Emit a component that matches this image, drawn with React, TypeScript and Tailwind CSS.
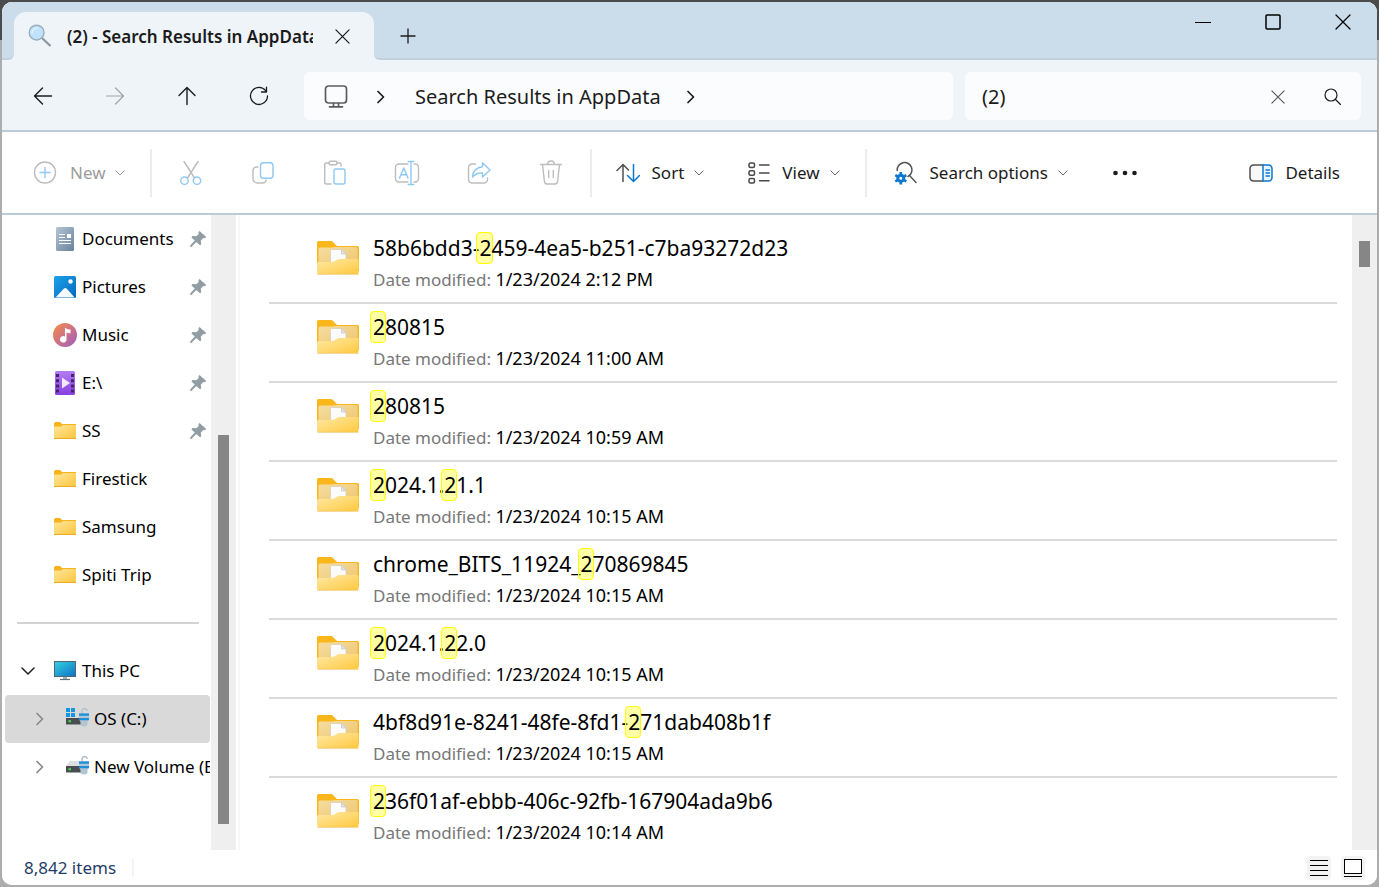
import React, { useState } from "react";

const iconBase = {
  fill: "none",
  strokeLinecap: "round" as const,
  strokeLinejoin: "round" as const,
  "aria-hidden": true,
};

const Chevron = ({ className }: { className: string }) => (
  <svg {...iconBase} viewBox="0 0 10 6" className={`w-[10px] h-[6px] ${className}`} stroke="currentColor" strokeWidth="1">
    <path d="M.8.8 5 5 9.200.8" />
  </svg>
);

const ChevronRight = ({ className }: { className: string }) => (
  <svg {...iconBase} viewBox="0 0 8 14" className={`w-2 h-[14px] shrink-0 ${className}`} stroke="currentColor" strokeWidth="1.7">
    <path d="M1 1.500 6.500 7 1 12.500" />
  </svg>
);

const CloseIcon = ({ className }: { className: string }) => (
  <svg {...iconBase} viewBox="0 0 16 16" className={className} stroke="currentColor" strokeWidth="1.3">
    <path d="M1 1 15 15M15 1 1 15" />
  </svg>
);

const MagnifierIcon = () => (
  <svg viewBox="0 0 24 24" className="w-6 h-6 shrink-0" fill="none" aria-hidden>
    <path d="m14 14 8.500 8" stroke="#8b979f" strokeWidth="2.300" />
    <circle cx="8.600" cy="8.600" r="7.400" fill="#bfe3fd" stroke="#9aaebb" strokeWidth="1.400" />
    <path d="M4 10a5.500 5.500 0 0 1 6-6" stroke="#dff2ff" strokeWidth="1.500" />
  </svg>
);

const BackIcon = () => (
  <svg {...iconBase} viewBox="0 0 20 20" className="w-5 h-5" stroke="currentColor" strokeWidth="1.400">
    <path d="M18.500 10H1.500M9.500 2 1.500 10l8 8" />
  </svg>
);

const ForwardIcon = () => (
  <svg {...iconBase} viewBox="0 0 20 20" className="w-5 h-5" stroke="currentColor" strokeWidth="1.200">
    <path d="M1.500 10h17M10.500 2l8 8-8 8" />
  </svg>
);

const UpIcon = () => (
  <svg {...iconBase} viewBox="0 0 20 20" className="w-5 h-5" stroke="currentColor" strokeWidth="1.400">
    <path d="M10 18.500v-17M2 9.500l8-8 8 8" />
  </svg>
);

const RefreshIcon = () => (
  <svg {...iconBase} viewBox="0 0 20 20" className="w-5 h-5" stroke="currentColor" strokeWidth="1.300">
    <path d="M18.500 10a8.500 8.500 0 1 1-1.800-5.300L17.500 6M17.500 1.200V6h-5" />
  </svg>
);

const MonitorIcon = () => (
  <svg {...iconBase} viewBox="0 0 24 24" className="w-6 h-6" stroke="#5c5c5c" strokeWidth="1.700">
    <rect x="1.500" y="1" width="21" height="17" rx="3" />
    <path d="M9.500 18.500v3M14.500 18.500v3M5.500 21.800h13" />
  </svg>
);

const NewIcon = () => (
  <svg {...iconBase} viewBox="0 0 24 24" className="w-6 h-6" strokeWidth="1.400">
    <circle cx="12" cy="11.500" r="10.500" stroke="#bdbdbd" />
    <path d="M12 6.500v10M7 11.500h10" stroke="#8fc8f2" />
  </svg>
);

const CutIcon = () => (
  <svg {...iconBase} viewBox="0 0 24 26" className="w-6 h-[26px]" strokeWidth="1.400">
    <path d="M5 1.500 15.500 18M19 1.500 8.500 18" stroke="#bdbdbd" />
    <circle cx="5.500" cy="20.700" r="3.700" stroke="#8fc8f2" />
    <circle cx="18" cy="20.700" r="3.700" stroke="#8fc8f2" />
  </svg>
);

const CopyIcon = () => (
  <svg {...iconBase} viewBox="0 0 24 24" className="w-6 h-6" strokeWidth="1.400">
    <path d="M7 6H5.500A3.500 3.500 0 0 0 2 9.500V18a4 4 0 0 0 4 4h5.500a3.500 3.500 0 0 0 3.500-3" stroke="#bdbdbd" />
    <rect x="9.500" y="1.800" width="12.500" height="15.500" rx="3" stroke="#8fc8f2" />
  </svg>
);

const PasteIcon = () => (
  <svg {...iconBase} viewBox="0 0 24 26" className="w-6 h-[26px]" strokeWidth="1.400">
    <path d="M8 24H3.500A1.800 1.800 0 0 1 1.700 22.200V4.500A1.500 1.500 0 0 1 3.200 3H6M14 3h2.500A1.500 1.500 0 0 1 18 4.500V6" stroke="#bdbdbd" />
    <rect x="6" y="1.300" width="8" height="3.500" rx="1.500" stroke="#bdbdbd" />
    <rect x="11" y="9" width="11" height="15" rx="2" stroke="#8fc8f2" />
  </svg>
);

const RenameIcon = () => (
  <svg {...iconBase} viewBox="0 0 26 26" className="w-[26px] h-[26px]" strokeWidth="1.400">
    <path d="M14 4H5a3.500 3.500 0 0 0-3.500 3.500v11A3.500 3.500 0 0 0 5 22h9M20 4h1a3.500 3.500 0 0 1 3.500 3.500v11A3.500 3.500 0 0 1 21 22h-1" stroke="#bdbdbd" />
    <path d="M5.500 18 9.800 8l4.200 10M7 14.800h5.500M17 1.500v23M14.200 1.500h5.600M14.200 24.500h5.600" stroke="#8fc8f2" />
  </svg>
);

const ShareIcon = () => (
  <svg {...iconBase} viewBox="0 0 24 24" className="w-6 h-6" strokeWidth="1.400">
    <path d="M8.500 3H5a3.500 3.500 0 0 0-3.500 3.500v12A3.500 3.500 0 0 0 5 22h12a3.500 3.500 0 0 0 3.500-3.500V17" stroke="#bdbdbd" />
    <path d="M15.500 1.800 23 9l-7.500 7v-4c-4.500-.3-7.500 1-10 4 0-5.500 4-9.800 10-10.300z" stroke="#8fc8f2" />
  </svg>
);

const DeleteIcon = () => (
  <svg {...iconBase} viewBox="0 0 24 26" className="w-6 h-[26px]" stroke="#bdbdbd" strokeWidth="1.400">
    <path d="M1.500 4.500h21M3.500 4.500l2 17.500a2.500 2.500 0 0 0 2.500 2h8a2.500 2.500 0 0 0 2.500-2l2-17.500M8.700 4.300a3.300 3.300 0 0 1 6.600 0M9.700 10.500v7M14.300 10.500v7" />
  </svg>
);

const SortIcon = () => (
  <svg {...iconBase} viewBox="0 0 24 20" className="w-6 h-5" strokeWidth="1.500">
    <path d="M7 18.500V1.500M1 7.500l6-6 5.500 5.500" stroke="#505050" />
    <path d="M17.500 1.500v17M11.500 12.500l6 6 6-6" stroke="#0a78d0" />
  </svg>
);

const ViewIcon = () => (
  <svg {...iconBase} viewBox="0 0 22 22" className="w-[22px] h-[22px]" stroke="#484848" strokeWidth="1.500">
    <rect x="1" y="1" width="5.500" height="4.500" rx="1.500" />
    <rect x="1" y="8.700" width="5.500" height="4.500" rx="1.500" />
    <rect x="1" y="16.400" width="5.500" height="4.500" rx="1.500" />
    <path d="M11.500 3H21M11.500 11H21M11.500 18.700H21" />
  </svg>
);

const SearchOptionsIcon = () => (
  <svg viewBox="0 0 24 24" className="w-6 h-6" fill="none" aria-hidden>
    <path d="M3.200 9.500A7.400 7.400 0 1 1 14 15.500M15.800 14.800l6.200 6.700" stroke="#555" strokeWidth="1.500" strokeLinecap="round" />
    <circle cx="6.800" cy="17.300" r="3" stroke="#0a78d0" strokeWidth="3" />
    <path
      d="M6.800 11v3M6.800 20.600v3M1.300 14.100l2.600 1.600M9.700 18.900l2.600 1.600M1.300 20.500l2.600-1.600M9.700 15.700l2.600-1.600"
      stroke="#0a78d0"
      strokeWidth="2.600"
    />
  </svg>
);

const DetailsIcon = () => (
  <svg {...iconBase} viewBox="0 0 24 18" className="w-6 h-[18px]" strokeWidth="1.500">
    <path d="M14 1H4.500A3.500 3.500 0 0 0 1 4.500v9A3.500 3.500 0 0 0 4.500 17H14" stroke="#505050" fill="#f8f8f8" />
    <path d="M14 1h5.500A3.500 3.500 0 0 1 23 4.500v9a3.500 3.500 0 0 1-3.500 3.500H14z" stroke="#0a78d0" fill="#eaf6ff" />
    <path d="M17 6h3.500M17 9h3.500M17 12h3.500" stroke="#0a78d0" strokeWidth="1.300" />
  </svg>
);

const PinIcon = () => (
  <svg viewBox="0 0 16 16" className="w-4 h-4 shrink-0" aria-hidden>
    <path d="M9.500 0 16 5.800l-.8 1.400-2-.2-2.400 2.700.4 3.500-1.200 1L6.300 11 1.400 16 0 15.800l.3-1.600L4.800 9.400 1.500 6.400l1-1.300 3.700.2L8.800 3 8.400 1z" fill="#919ca3" />
  </svg>
);

const DocumentsIcon = () => (
  <svg viewBox="0 0 24 24" className="w-6 h-6" aria-hidden>
    <defs>
      <linearGradient id="doc" x1="0" y1="0" x2="1" y2="1">
        <stop offset="0" stopColor="#b3c5d7" />
        <stop offset="1" stopColor="#69829d" />
      </linearGradient>
    </defs>
    <rect x="3" width="18" height="24" rx="1.500" fill="url(#doc)" />
    <path d="M6 7.500h6M6 10.500h6M6 13.500h12M6 16.500h12" stroke="#fff" strokeWidth="1.200" />
    <rect x="14" y="7" width="4" height="4" fill="#fff" />
  </svg>
);

const PicturesIcon = () => (
  <svg viewBox="0 0 24 24" className="w-6 h-6" aria-hidden>
    <defs>
      <linearGradient id="pic" x1="0" y1="0" x2="1" y2="1">
        <stop offset="0" stopColor="#1ba3ea" />
        <stop offset="1" stopColor="#0768bd" />
      </linearGradient>
    </defs>
    <rect x="1" y="1" width="22" height="22" rx="1.500" fill="url(#pic)" />
    <path d="M2.500 22.500 11 13.500q1.300-1.200 2.600 0l8 9z" fill="#f4f9fd" />
    <circle cx="17.500" cy="6.500" r="2.200" fill="#fff" />
  </svg>
);

const MusicIcon = () => (
  <svg viewBox="0 0 24 24" className="w-6 h-6" aria-hidden>
    <defs>
      <linearGradient id="mus" x1="0" y1="0" x2="1" y2="1">
        <stop offset=".1" stopColor="#ee8850" />
        <stop offset=".9" stopColor="#a860b8" />
      </linearGradient>
    </defs>
    <circle cx="12" cy="12" r="12" fill="url(#mus)" />
    <path d="M12 4.500q2 2.500 5.500 2v3.800q-2.500.3-4-1V16a3.300 3.300 0 1 1-1.500-2.500z" fill="#fff" />
  </svg>
);

const VideoIcon = () => (
  <svg viewBox="0 0 24 24" className="w-6 h-6" aria-hidden>
    <defs>
      <linearGradient id="vid" x1="0" y1="0" x2="0" y2="1">
        <stop offset="0" stopColor="#b27cf2" />
        <stop offset="1" stopColor="#8a40e0" />
      </linearGradient>
    </defs>
    <rect x="2" width="20" height="24" rx="1.500" fill="url(#vid)" />
    <path d="M4.500 3v19M19.500 3v19" stroke="#43246e" strokeWidth="3" strokeDasharray="3 2.200" />
    <path d="m9 6.500 8 5.500-8 5.500z" fill="#f2eafc" />
  </svg>
);

const SmallFolderIcon = () => (
  <svg viewBox="0 0 24 24" className="w-6 h-6" aria-hidden>
    <defs>
      <linearGradient id="sf" x1="0" y1="0" x2="1" y2="1">
        <stop offset="0" stopColor="#ffe59a" />
        <stop offset="1" stopColor="#fdc63e" />
      </linearGradient>
    </defs>
    <path d="M1 4.500A1.500 1.500 0 0 1 2.500 3H7l2 2h14v4H1z" fill="#f7b31b" />
    <path d="M1 7.500h7L10 6h13v13.500H1z" fill="url(#sf)" />
    <path d="M1 19.500h22" stroke="#eda824" />
  </svg>
);

const ThisPcIcon = () => (
  <svg viewBox="0 0 24 24" className="w-6 h-6" aria-hidden>
    <defs>
      <linearGradient id="pc" x1="0" y1="0" x2="1" y2="1">
        <stop offset="0" stopColor="#35d1e0" />
        <stop offset="1" stopColor="#0c72c6" />
      </linearGradient>
    </defs>
    <rect x="1.500" y="2.500" width="21" height="15" fill="url(#pc)" stroke="#4f6674" />
    <path d="M10 18h4v2h-4z" fill="#a9b4bb" />
    <path d="M7 20.500h10" stroke="#5f6f79" strokeWidth="1.200" />
  </svg>
);

const DriveIcon = ({ system }: { system: boolean }) => (
  <svg viewBox="0 0 24 24" className="w-6 h-6" aria-hidden>
    {system ? (
      <path d="M1 1h4v4H1zM6 1h4v4H6zM1 6h4v4H1zM6 6h4v4H6z" fill="#1397e4" />
    ) : (
      <path d="M5 6h12l3 5H1z" fill="#dcdfe1" />
    )}
    <path d="M1 11h21v6.500H1z" fill="#4a4d4f" />
    <path d="M3.500 13.200H6v2H3.500z" fill="#3be04b" />
    <path d="M17 7V3.500a2.600 2.600 0 0 1 5 0V4" stroke="#b7c4cd" strokeWidth="1.600" fill="none" />
    <path d="M14 6h10v6l-1.500 3v2a3.500 2.500 0 0 1-7 0v-2L14 12z" fill="#b3c5d1" />
    <path d="M14 6.500h10v2.200H14zM14 11h10v2.200H14z" fill="#1d8fdd" />
  </svg>
);

const FolderIcon = () => (
  <svg viewBox="0 0 42 34" className="w-[42px] h-[34px] shrink-0" aria-hidden>
    <defs>
      <linearGradient id="lfBack" x1="0" y1="0" x2="1" y2="1">
        <stop offset="0" stopColor="#f5dda1" />
        <stop offset="1" stopColor="#eec66f" />
      </linearGradient>
      <linearGradient id="lfFront" x1="0" y1="0" x2="1" y2="1">
        <stop offset="0" stopColor="#ffe9a6" />
        <stop offset="1" stopColor="#ffc93f" />
      </linearGradient>
    </defs>
    <path d="M0 1.500A1.500 1.500 0 0 1 1.500 0H14q1 0 2 1l4 4h20.500A1.500 1.500 0 0 1 42 6.500V30H0z" fill="#f9b71c" />
    <path d="M1.500 8q0-1.500 1.500-1.500h12l3-.5h21q1.500 0 1.500 1.500V25h-39z" fill="url(#lfBack)" />
    <path d="M13.500 9.500q0-1 1-1H25l4 4V24H13.500z" fill="#fbfbfb" stroke="#d9cfb6" strokeWidth=".8" />
    <path d="M24.500 8.500v4.500H29z" fill="#e3e3e3" stroke="#c6c6c6" strokeWidth=".7" />
    <path d="M0 22.500Q0 21 1.500 21H15q1.500 0 3-1l2-1.300q1-.7 2.500-.7h18q1 0 1 1v12.500a1.500 1.500 0 0 1-1.500 1.500h-39A1.500 1.500 0 0 1 0 31.500z" fill="url(#lfFront)" />
    <path d="M.5 33.300h41" stroke="#eeb94a" strokeWidth=".7" />
  </svg>
);

const quickAccess = [
  { label: "Documents", icon: <DocumentsIcon />, pinned: true },
  { label: "Pictures", icon: <PicturesIcon />, pinned: true },
  { label: "Music", icon: <MusicIcon />, pinned: true },
  { label: "E:\\", icon: <VideoIcon />, pinned: true },
  { label: "SS", icon: <SmallFolderIcon />, pinned: true },
  { label: "Firestick", icon: <SmallFolderIcon />, pinned: false },
  { label: "Samsung", icon: <SmallFolderIcon />, pinned: false },
  { label: "Spiti Trip", icon: <SmallFolderIcon />, pinned: false },
];

// A "2" wrapped in brackets is a highlighted match
const results = [
  { name: "58b6bdd3-[2]459-4ea5-b251-c7ba93272d23", date: "1/23/2024 2:12 PM" },
  { name: "[2]80815", date: "1/23/2024 11:00 AM" },
  { name: "[2]80815", date: "1/23/2024 10:59 AM" },
  { name: "[2]024.1.[2]1.1", date: "1/23/2024 10:15 AM" },
  { name: "chrome_BITS_11924_[2]70869845", date: "1/23/2024 10:15 AM" },
  { name: "[2]024.1.[2]2.0", date: "1/23/2024 10:15 AM" },
  { name: "4bf8d91e-8241-48fe-8fd1-[2]71dab408b1f", date: "1/23/2024 10:15 AM" },
  { name: "[2]36f01af-ebbb-406c-92fb-167904ada9b6", date: "1/23/2024 10:14 AM" },
];

const fileActions = [
  { label: "Cut", icon: <CutIcon /> },
  { label: "Copy", icon: <CopyIcon /> },
  { label: "Paste", icon: <PasteIcon /> },
  { label: "Rename", icon: <RenameIcon /> },
  { label: "Share", icon: <ShareIcon /> },
  { label: "Delete", icon: <DeleteIcon /> },
];

const TitleBar = () => (
  <div className="flex h-[58px] shrink-0 bg-[#eff4f9]">
    <div className="w-3 rounded-br-md border-b-2 border-[#c0d0df] bg-[#cbdceb]" />
    {/* The strips on both sides curve into the active tab */}
    <div className="flex w-[360px] flex-col bg-linear-to-b from-[#cbdceb] from-50% to-[#eff4f9] to-50% pt-[10px]">
      <div className="flex flex-1 items-center rounded-t-xl bg-[#eff4f9] pl-[14px]">
        <MagnifierIcon />
        <span className="ml-[15px] w-[246px] overflow-hidden whitespace-nowrap pt-[2px] font-semibold">
          (2) - Search Results in AppData
        </span>
        <button aria-label="Close tab" className="ml-[22px]">
          <CloseIcon className="w-[15px] h-[15px]" />
        </button>
      </div>
    </div>
    <div className="flex flex-1 rounded-bl-md border-b-2 border-[#c0d0df] bg-[#cbdceb]">
      <button aria-label="New tab" className="ml-[26px] mt-3">
        <svg {...iconBase} viewBox="0 0 16 16" className="w-4 h-4" stroke="currentColor" strokeWidth="1.300">
          <path d="M8 1v14M1 8h14" />
        </svg>
      </button>
      <div className="ml-auto flex h-10 items-center gap-[54px] pr-[26px] text-black">
        <button aria-label="Minimize">
          <svg viewBox="0 0 16 16" className="w-4 h-4" aria-hidden>
            <path d="M0 8.500h16" stroke="currentColor" />
          </svg>
        </button>
        <button aria-label="Maximize">
          <svg {...iconBase} viewBox="0 0 16 16" className="w-4 h-4" stroke="currentColor" strokeWidth="1.500">
            <rect x="1" y="1" width="14" height="14" rx="1" />
          </svg>
        </button>
        <button aria-label="Close">
          <CloseIcon className="w-4 h-4" />
        </button>
      </div>
    </div>
  </div>
);

const NavBar = () => {
  const [query, setQuery] = useState("(2)");

  return (
    <div className="flex shrink-0 items-center bg-[#eff4f9] pt-3 pb-[10px] pl-[5px] pr-4 border-b-2 border-[#bccbd9]">
      <button aria-label="Back" className="flex w-[72px] justify-center"><BackIcon /></button>
      <button aria-label="Forward" className="flex w-[72px] justify-center text-[#a0a4a8]"><ForwardIcon /></button>
      <button aria-label="Up" className="flex w-[72px] justify-center"><UpIcon /></button>
      <button aria-label="Refresh" className="flex w-[72px] justify-center"><RefreshIcon /></button>
      <div className="ml-[9px] flex h-12 flex-1 items-center rounded-md bg-[#fbfcfe] pl-5 pt-px text-xl">
        <MonitorIcon />
        <ChevronRight className="ml-[29px]" />
        <a href="#results" className="ml-[30px] whitespace-nowrap">Search Results in AppData</a>
        <ChevronRight className="ml-[26px]" />
      </div>
      <div className="ml-3 flex h-12 w-[396px] items-center rounded-md bg-[#fbfcfe] pl-[17px] pr-5 pt-px text-xl">
        <input
          aria-label="Search"
          value={query}
          onChange={(e) => setQuery(e.target.value)}
          className="min-w-0 flex-1 bg-transparent outline-none"
        />
        <button aria-label="Clear search" onClick={() => setQuery("")} className="text-[#55585b]">
          <CloseIcon className="w-[14px] h-[14px]" />
        </button>
        <button aria-label="Run search" className="ml-[39px]">
          <svg {...iconBase} viewBox="0 0 17 17" className="w-[17px] h-[17px]" stroke="currentColor" strokeWidth="1.200">
            <circle cx="7" cy="7" r="6" />
            <path d="m11.500 11.500 5 5" />
          </svg>
        </button>
      </div>
    </div>
  );
};

const Divider = () => <div className="h-12 w-[2px] bg-[#ececec]" />;

const Toolbar = () => (
  <div className="flex h-[83px] shrink-0 items-center whitespace-nowrap border-b-2 border-[#bccbd9] bg-white pt-px">
    <button disabled className="ml-[31px] mr-[25px] flex items-center text-[#9b9b9b]">
      <NewIcon />
      <span className="ml-[13px]">New</span>
      <Chevron className="ml-[9px]" />
    </button>
    <Divider />
    <div className="mx-[3px] flex">
      {fileActions.map((action) => (
        <button key={action.label} disabled aria-label={action.label} className="flex w-[72px] items-center justify-center">
          {action.icon}
        </button>
      ))}
    </div>
    <Divider />
    <button className="ml-6 flex items-center">
      <SortIcon />
      <span className="ml-3">Sort</span>
      <Chevron className="ml-[10px] text-[#6b6b6b]" />
    </button>
    <button className="ml-11 mr-[25px] flex items-center">
      <ViewIcon />
      <span className="ml-3">View</span>
      <Chevron className="ml-[10px] text-[#6b6b6b]" />
    </button>
    <Divider />
    <button className="ml-[27px] flex items-center">
      <SearchOptionsIcon />
      <span className="ml-3">Search options</span>
      <Chevron className="ml-[10px] text-[#6b6b6b]" />
    </button>
    <button aria-label="See more" className="ml-[45px]">
      <svg viewBox="0 0 24 6" className="w-6 h-[6px]" fill="currentColor" aria-hidden>
        <circle cx="2.500" cy="3" r="2.300" />
        <circle cx="12" cy="3" r="2.300" />
        <circle cx="21.500" cy="3" r="2.300" />
      </svg>
    </button>
    <button className="ml-auto mr-[37px] flex items-center">
      <DetailsIcon />
      <span className="ml-3">Details</span>
    </button>
  </div>
);

const Sidebar = () => (
  <aside className="flex w-[238px] shrink-0 border-r-2 border-[#f7f7f7] text-black">
    <nav className="min-w-0 flex-1 overflow-hidden">
      <ul>
        {quickAccess.map((item) => (
          <li key={item.label}>
            <a href="#" className="flex h-12 items-center pl-[51px] pr-[5px]">
              {item.icon}
              <span className="ml-[5px] flex-1">{item.label}</span>
              {item.pinned && <PinIcon />}
            </a>
          </li>
        ))}
      </ul>
      <hr className="my-[23px] ml-[15px] mr-3 border-0 border-t-2 border-[#d3d3d3]" />
      <a href="#" className="flex h-12 items-center pl-[19px]">
        <svg {...iconBase} viewBox="0 0 14 8" className="w-[14px] h-2" stroke="#222" strokeWidth="1.500">
          <path d="m1 1 6 6 6-6" />
        </svg>
        <span className="ml-[18px]"><ThisPcIcon /></span>
        <span className="ml-[5px]">This PC</span>
      </a>
      <a href="#" className="ml-[3px] mr-px flex h-12 items-center rounded-sm bg-[#d9d9d9] pl-[31px]">
        <ChevronRight className="text-[#8a8a8a]" />
        <span className="ml-[21px]"><DriveIcon system /></span>
        <span className="ml-[5px]">OS (C:)</span>
      </a>
      <a href="#" className="ml-[3px] mr-px flex h-12 items-center overflow-hidden pl-[31px]">
        <ChevronRight className="text-[#8a8a8a]" />
        <span className="ml-[21px] shrink-0"><DriveIcon system={false} /></span>
        <span className="ml-[5px] whitespace-nowrap">New Volume (E:)</span>
      </a>
    </nav>
    <div className="mr-[2px] w-[25px] bg-[#efefef] pt-[220px]">
      <div className="ml-[7px] h-[389px] w-[11px] bg-[#868686]" />
    </div>
  </aside>
);

const FileName = ({ name }: { name: string }) => (
  <>
    {name.split(/(\[2\])/).map((part, i) =>
      part === "[2]" ? (
        <mark
          key={i}
          className="-ml-[3px] -mr-px inline-block h-8 rounded-sm border border-[#ffff00] bg-[#ffff00]/35 pl-[2px] leading-[30px] text-black"
        >
          2
        </mark>
      ) : (
        <span key={i}>{part}</span>
      )
    )}
  </>
);

const Results = () => (
  <main id="results" className="flex min-w-0 flex-1 bg-white text-black">
    <ul className="min-w-0 flex-1 overflow-hidden pl-[29px] pr-[15px] pt-[10px]">
      {results.map((item, i) => (
        <li key={i} className="border-b-2 border-[#dadada]">
          <a href="#" className="flex pt-[7px] pb-[6px] pl-12">
            <span className="mt-[9px]"><FolderIcon /></span>
            <div className="ml-[14px] whitespace-nowrap">
              <p className="h-8 text-[21px] leading-8"><FileName name={item.name} /></p>
              <p className="h-8 leading-[30px]">
                <span className="text-[#777777]">Date modified: </span>
                <span className="text-lg leading-[30px]">{item.date}</span>
              </p>
            </div>
          </a>
        </li>
      ))}
    </ul>
    <div className="w-[25px] shrink-0 bg-[#efefef] pt-[26px]">
      <div className="ml-[7px] h-[26px] w-[11px] bg-[#868686]" />
    </div>
  </main>
);

const StatusBar = () => (
  <footer className="flex h-[35px] shrink-0 items-center bg-white pl-[22px] pr-3">
    <span className="text-[#1f3c68]">8,842 items</span>
    <div className="ml-4 h-[17px] w-[2px] bg-[#f3f3f3]" />
    <button aria-label="Details view" className="ml-auto flex h-6 w-6 items-center justify-center rounded-sm bg-[#f3f3f3]">
      <svg viewBox="0 0 18 16" className="w-[18px] h-4" stroke="#000" aria-hidden>
        <path d="M0 .5h18M0 5.500h18M0 10.500h18M0 15.500h18" />
      </svg>
    </button>
    <button aria-label="Thumbnail view" className="ml-[10px] flex h-6 w-6 items-center justify-center rounded-sm bg-[#f3f3f3]">
      <svg viewBox="0 0 18 18" className="w-[18px] h-[18px]" stroke="#000" fill="none" aria-hidden>
        <rect x=".5" y=".5" width="17" height="14" fill="#fff" />
        <path d="M0 17.500h18" />
      </svg>
    </button>
  </footer>
);

const App = () => {
  return (
    <div className="h-screen bg-linear-to-b from-[#4b4b4b] from-[40px] to-[#adadad] to-[40px] p-[2px] font-['Noto_Sans',sans-serif] text-[17px] leading-6 text-[#1b1b1b]">
      <div className="flex h-full flex-col overflow-hidden rounded-[10px] bg-white">
        <TitleBar />
        <NavBar />
        <Toolbar />
        <div className="flex min-h-0 flex-1">
          <Sidebar />
          <Results />
        </div>
        <StatusBar />
      </div>
    </div>
  );
};

export default App;
